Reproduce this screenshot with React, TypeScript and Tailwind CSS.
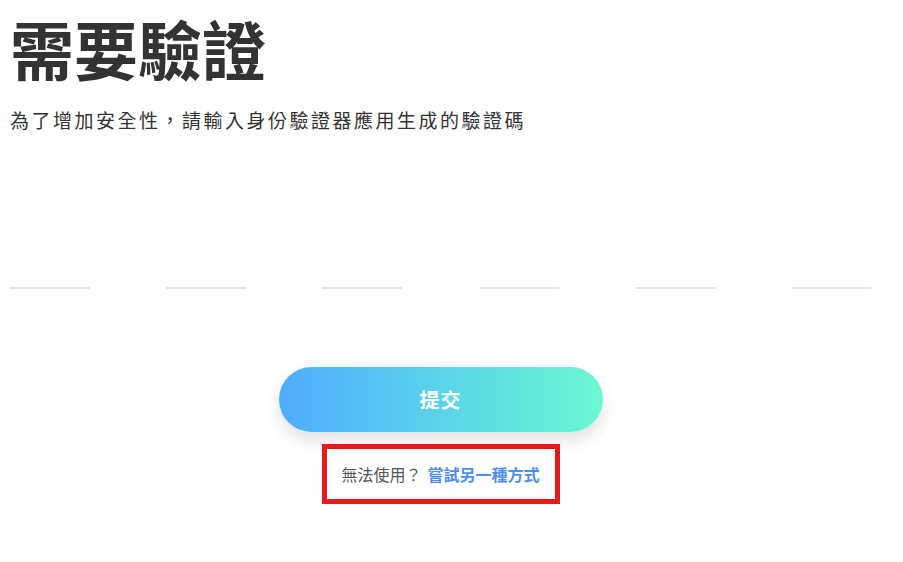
export default function App() {
  const boxes = [0, 1, 2, 3, 4, 5];

  return (
    <div
      className="min-h-[562px] w-[903px] bg-white text-[#333]"
      style={{ fontFamily: '"Noto Sans CJK TC", "Noto Sans", sans-serif' }}
    >
      <div className="w-[881px] px-[10px]">
        {/* 標題 */}
        <h1 className="pt-[11px] text-[64px] font-bold leading-[72px] text-[#333]">
          需要驗證
        </h1>
        <p className="mt-[23px] text-[19px] leading-[28px] tracking-[2.5px] text-[#333]">
          為了增加安全性，請輸入身份驗證器應用生成的驗證碼
        </p>

        {/* 驗證碼輸入 */}
        <div className="mt-[107px] flex justify-between">
          {boxes.map((i) => (
            <input
              key={i}
              type="text"
              maxLength={1}
              className="h-[48px] w-[80px] border-b-2 border-[#e6e6e6] bg-transparent text-center text-[28px] outline-none"
            />
          ))}
        </div>

        {/* 提交 */}
        <div className="mt-[78px] flex flex-col items-center">
          <button className="h-[65px] w-[324px] rounded-full bg-gradient-to-r from-[#4facfe] to-[#6cf8d0] text-[20px] font-bold tracking-[1px] text-white shadow-[0_8px_16px_rgba(0,0,0,0.12)]">
            提交
          </button>
          <div className="mt-[12px] flex h-[60px] w-[238px] items-center justify-center border-[5px] border-[#e21b1b] text-[16px]">
            <span className="text-[#555]">無法使用？</span>
            <a href="#" className="ml-[6px] font-bold text-[#4a8ff0]">
              嘗試另一種方式
            </a>
          </div>
        </div>
      </div>
    </div>
  );
}
